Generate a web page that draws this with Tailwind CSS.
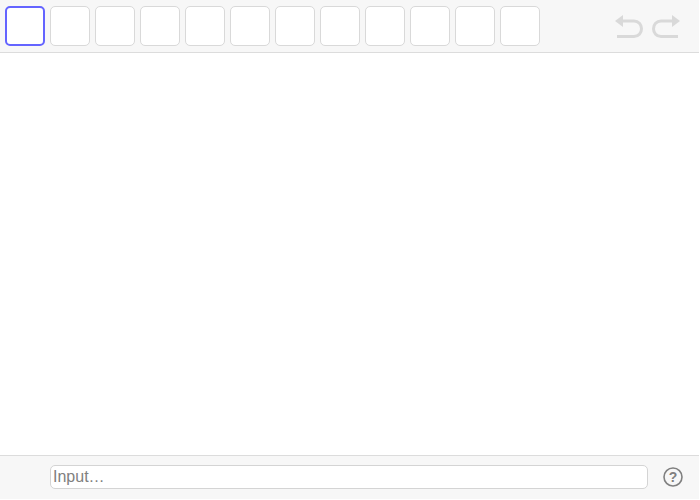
<!DOCTYPE html>
<html lang="en">
<head>
    <meta charset="UTF-8">
    <title>Graphing</title>
    <script src="https://cdn.jsdelivr.net/npm/@tailwindcss/browser@4"></script>
</head>
<body class="bg-white overflow-hidden font-['Liberation_Sans',sans-serif]">
    <div class="flex flex-col w-[699px] h-[499px]">
        <!-- toolbar -->
        <div class="flex items-center justify-between h-[53px] pl-[5px] pr-[19px] bg-[#f7f7f7] border-b border-[#dcdcdc]">
            <div class="flex gap-[5px]">
                <button class="w-10 h-10 bg-white rounded-[5px] border-2 border-[#6464ff]"></button>
                <button class="w-10 h-10 bg-white rounded-[5px] border border-[#d9d9d9]"></button>
                <button class="w-10 h-10 bg-white rounded-[5px] border border-[#d9d9d9]"></button>
                <button class="w-10 h-10 bg-white rounded-[5px] border border-[#d9d9d9]"></button>
                <button class="w-10 h-10 bg-white rounded-[5px] border border-[#d9d9d9]"></button>
                <button class="w-10 h-10 bg-white rounded-[5px] border border-[#d9d9d9]"></button>
                <button class="w-10 h-10 bg-white rounded-[5px] border border-[#d9d9d9]"></button>
                <button class="w-10 h-10 bg-white rounded-[5px] border border-[#d9d9d9]"></button>
                <button class="w-10 h-10 bg-white rounded-[5px] border border-[#d9d9d9]"></button>
                <button class="w-10 h-10 bg-white rounded-[5px] border border-[#d9d9d9]"></button>
                <button class="w-10 h-10 bg-white rounded-[5px] border border-[#d9d9d9]"></button>
                <button class="w-10 h-10 bg-white rounded-[5px] border border-[#d9d9d9]"></button>
            </div>
            <div class="flex gap-[9px]">
                <svg class="w-7 h-6" viewBox="0 0 28 24" fill="none" stroke="#d9d9d9" stroke-width="3">
                    <path d="M4 7H19C23.500 7 26.500 10.500 26.500 14.750C26.500 19 23.500 22.500 19 22.500H2"/>
                    <path d="M8 1L0 7L8 13Z" fill="#d9d9d9" stroke="none"/>
                </svg>
                <svg class="w-7 h-6" viewBox="0 0 28 24" fill="none" stroke="#d9d9d9" stroke-width="3">
                    <path d="M24 7H9C4.500 7 1.500 10.500 1.500 14.750C1.500 19 4.500 22.500 9 22.500H26"/>
                    <path d="M20 1L28 7L20 13Z" fill="#d9d9d9" stroke="none"/>
                </svg>
            </div>
        </div>

        <div class="flex-1 bg-white"></div>

        <!-- input bar -->
        <div class="flex items-center h-[44px] pb-px pl-[50px] pr-4 gap-[15px] bg-[#f7f7f7] border-t border-[#dcdcdc]">
            <input type="text" placeholder="Input…" class="flex-1 h-6 px-[2px] bg-white rounded-[5px] border border-[#d4d4d4] text-base outline-none placeholder:text-[#808080]">
            <svg class="w-5 h-5" viewBox="0 0 20 20" fill="none">
                <circle cx="10" cy="10" r="9" stroke="#808080" stroke-width="1.600"/>
                <text x="10" y="15" text-anchor="middle" fill="#808080" font-size="14" font-weight="700" font-family="Liberation Sans">?</text>
            </svg>
        </div>
    </div>
</body>
</html>
